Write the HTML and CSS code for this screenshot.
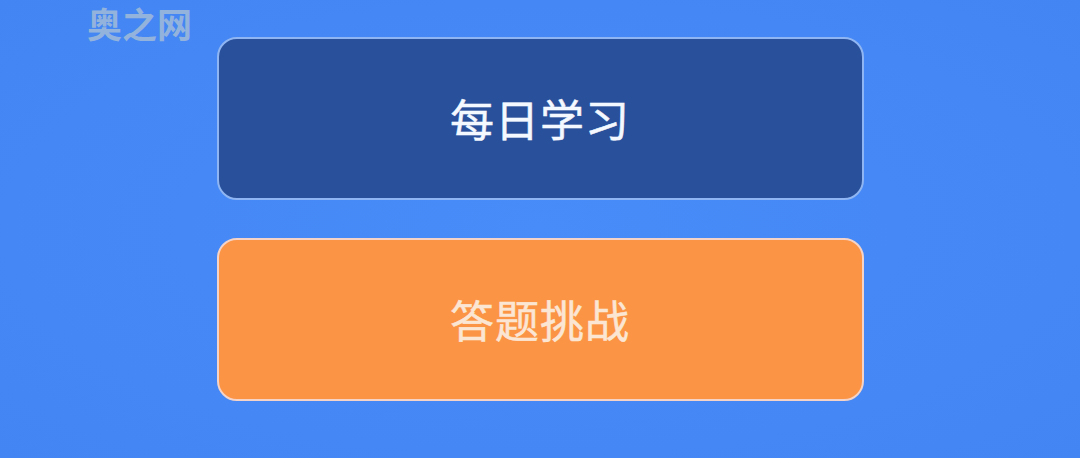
FILE: index.html
```html
<!DOCTYPE html>
<html lang="zh">
<head>
<meta charset="utf-8">
<link rel="stylesheet" href="styles.css">
</head>
<body>
<div class="page">
  <div class="watermark">奥之网</div>
  <div class="menu">
    <div class="btn btn-study">每日学习</div>
    <div class="btn btn-quiz">答题挑战</div>
  </div>
</div>
</body>
</html>
```
FILE: styles.css
```css
html, body {
  margin: 0;
  padding: 0;
}
body {
  width: 1080px;
  height: 458px;
  overflow: hidden;
  background: #4588f6;
  font-family: "Noto Sans CJK SC", "Noto Sans", sans-serif;
}
.page {
  position: relative;
  width: 1080px;
  height: 458px;
  background: radial-gradient(ellipse at 50% 50%, #478cf8 0%, #4587f5 70%, #4385f3 100%);
}
.watermark {
  position: absolute;
  left: 83px;
  top: 0;
  padding: 4px 4px 2px;
  white-space: nowrap;
  font-size: 35px;
  line-height: 1.1;
  font-weight: 700;
  color: #93b3dc;
}
.menu {
  display: flex;
  flex-direction: column;
  align-items: center;
  gap: 38px;
  padding-top: 37px;
}
.btn {
  box-sizing: border-box;
  width: 647px;
  height: 163px;
  border-radius: 20px;
  display: flex;
  align-items: center;
  justify-content: center;
  font-size: 44px;
  font-weight: 400;
  letter-spacing: 1px;
  padding-bottom: 2px;
  -webkit-text-stroke: 0.5px currentColor;
}
.btn-study {
  background: #29509a;
  border: 2.5px solid #8fb6f2;
  color: #f4f8ff;
}
.btn-quiz {
  background: #fc9446;
  border: 2.5px solid #f5d3c6;
  color: #fbe6d4;
}
```
